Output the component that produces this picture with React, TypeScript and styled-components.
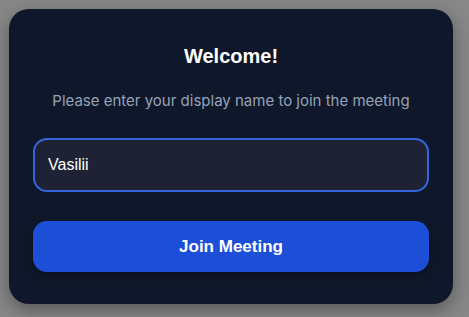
import { createGlobalStyle, styled } from "styled-components"

const GlobalStyle = createGlobalStyle`
  html, body {
    margin: 0;
    padding: 0;
    background: #878787;
  }
  * {
    box-sizing: border-box;
  }
`

const Page = styled.div`
  width: 469px;
  height: 317px;
  padding: 9px 16px 13px 9px;
  display: flex;
`

const Card = styled.div`
  flex: 1;
  background: #0f172a;
  border-radius: 20px;
  box-shadow: 0 6px 18px rgba(0, 0, 0, 0.35);
  padding: 33px 24px 32px;
  display: flex;
  flex-direction: column;
  align-items: stretch;
`

const Title = styled.h1`
  margin: 0;
  text-align: center;
  color: #ffffff;
  font-family: "Liberation Sans", Arial, sans-serif;
  font-weight: 700;
  font-size: 20px;
  line-height: 28px;
`

const Subtitle = styled.p`
  margin: 21px 0 0;
  text-align: center;
  color: #94a3b8;
  font-family: Inter, "Noto Sans", sans-serif;
  font-size: 15px;
  line-height: 20px;
`

const NameInput = styled.input`
  margin-top: 27px;
  height: 54px;
  width: 100%;
  padding: 0 13px;
  background: #1e2234;
  border: 2px solid #3565dc;
  border-radius: 14px;
  color: #ffffff;
  font-family: "Liberation Sans", Arial, sans-serif;
  font-size: 16px;
  outline: none;
  caret-color: #ffffff;
`

const JoinButton = styled.button`
  margin-top: 29px;
  height: 51px;
  width: 100%;
  background: #1d4ed8;
  border: none;
  border-radius: 14px;
  color: #ffffff;
  font-family: "Liberation Sans", Arial, sans-serif;
  font-weight: 700;
  font-size: 17px;
  cursor: pointer;
  box-shadow: 0 4px 10px rgba(0, 0, 0, 0.25);
`

export default function App() {
  return (
    <>
      <GlobalStyle />
      <Page>
        <Card>
          <Title>Welcome!</Title>
          <Subtitle>Please enter your display name to join the meeting</Subtitle>
          <NameInput defaultValue="Vasilii" autoFocus />
          <JoinButton>Join Meeting</JoinButton>
        </Card>
      </Page>
    </>
  )
}
